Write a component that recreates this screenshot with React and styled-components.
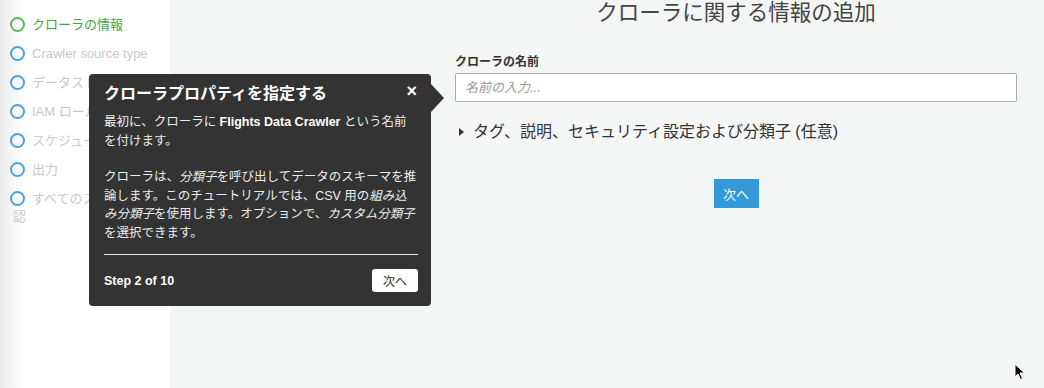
import React from "react";
import styled, { createGlobalStyle } from "styled-components";

const GlobalStyle = createGlobalStyle`
  html, body {
    margin: 0;
    padding: 0;
    height: 100%;
    background: #f4f5f5;
    font-family: "Liberation Sans", "Noto Sans CJK JP", sans-serif;
  }
  #root {
    height: 100%;
  }
`;

const Page = styled.div`
  position: relative;
  display: flex;
  height: 388px;
  overflow: hidden;
`;

const Sidebar = styled.div`
  width: 170px;
  flex-shrink: 0;
  box-sizing: border-box;
  padding: 16px 5px 0 13px;
  background: linear-gradient(to right, #ececec 0px, #fafafa 18px, #ffffff 28px);
`;

const Step = styled.div`
  font-size: 13px;
  line-height: 18px;
  margin-bottom: 11px;
  color: ${({ active }) => (active ? "#3da640" : "#c8c8c8")};
`;

const Circle = styled.span`
  display: inline-block;
  box-sizing: border-box;
  width: 15px;
  height: 15px;
  margin: 0 7px 0 -3px;
  vertical-align: -3px;
  border-radius: 50%;
  border: 2px solid ${({ active }) => (active ? "#5bb85d" : "#4aa3df")};
`;

const Main = styled.div`
  flex: 1;
  padding-left: 285px;
`;

const Form = styled.div`
  width: 562px;
  display: flex;
  flex-direction: column;
`;

const Title = styled.h1`
  margin: 0;
  font-size: 21.5px;
  line-height: 26px;
  font-weight: 400;
  color: #444;
  text-align: center;
`;

const Label = styled.label`
  margin-top: 28px;
  font-size: 12px;
  line-height: 16px;
  font-weight: 700;
  color: #333;
`;

const Input = styled.input`
  margin-top: 3px;
  height: 29px;
  box-sizing: border-box;
  border: 1px solid #aaa;
  border-radius: 2px;
  background: #fff;
  padding: 0 9px;
  font-family: inherit;
  font-size: 13px;
  outline: none;
  &::placeholder {
    color: #999;
    font-style: italic;
  }
`;

const Expander = styled.div`
  margin-top: 20px;
  display: flex;
  align-items: center;
  gap: 9px;
  padding-left: 4px;
  font-size: 16px;
  line-height: 20px;
  color: #333;
`;

const Caret = styled.span`
  width: 0;
  height: 0;
  border-left: 5px solid #333;
  border-top: 4px solid transparent;
  border-bottom: 4px solid transparent;
`;

const PrimaryButton = styled.button`
  align-self: center;
  margin-top: 37px;
  width: 45px;
  height: 29px;
  border: none;
  background: #3399d7;
  color: #fff;
  font-family: inherit;
  font-size: 13px;
  padding: 0;
`;

const Tooltip = styled.div`
  position: absolute;
  left: 89px;
  top: 74px;
  width: 342px;
  box-sizing: border-box;
  padding: 9px 13px 14px 15px;
  background: #333;
  border-radius: 4px;
  color: #ececec;
  &::after {
    content: "";
    position: absolute;
    right: -13px;
    top: 10px;
    border-left: 13px solid #333;
    border-top: 14px solid transparent;
    border-bottom: 14px solid transparent;
  }
`;

const TipHead = styled.div`
  display: flex;
  justify-content: space-between;
  align-items: center;
`;

const TipTitle = styled.div`
  font-size: 16px;
  line-height: 22px;
  font-weight: 700;
  color: #fff;
`;

const Close = styled.span`
  font-size: 18px;
  line-height: 18px;
  font-weight: 700;
  color: #fff;
  margin-top: -6px;
  margin-right: 1px;
`;

const TipText = styled.p`
  margin: ${({ first }) => (first ? "8px" : "18px")} 0 0;
  font-size: 12.5px;
  line-height: 18.5px;
  white-space: nowrap;
  b {
    color: #fff;
  }
`;

const Rule = styled.div`
  margin-top: 12px;
  height: 1px;
  background: #e8e8e8;
`;

const TipFooter = styled.div`
  margin-top: 14px;
  display: flex;
  justify-content: space-between;
  align-items: center;
`;

const StepCount = styled.span`
  font-size: 12.5px;
  font-weight: 700;
  color: #fff;
`;

const NextSmall = styled.button`
  width: 46px;
  height: 23px;
  border: none;
  border-radius: 3px;
  background: #fff;
  color: #333;
  font-family: inherit;
  font-size: 12px;
  padding: 0;
`;

const Cursor = styled.svg`
  position: absolute;
  left: 1014px;
  top: 363px;
`;

const steps = [
  { label: "クローラの情報", active: true },
  { label: "Crawler source type" },
  { label: "データストアの追加" },
  { label: "IAM ロールの選択" },
  { label: "スケジュールの作成" },
  { label: "出力" },
  { label: "すべてのステップの確認" },
];

export default function App() {
  return (
    <>
      <GlobalStyle />
      <Page>
        <Sidebar>
          {steps.map((s) => (
            <Step key={s.label} active={s.active}>
              <Circle active={s.active} />
              {s.label}
            </Step>
          ))}
        </Sidebar>
        <Main>
          <Form>
            <Title>クローラに関する情報の追加</Title>
            <Label>クローラの名前</Label>
            <Input placeholder="名前の入力..." />
            <Expander>
              <Caret />
              タグ、説明、セキュリティ設定および分類子 (任意)
            </Expander>
            <PrimaryButton>次へ</PrimaryButton>
          </Form>
        </Main>

        <Tooltip>
          <TipHead>
            <TipTitle>クローラプロパティを指定する</TipTitle>
            <Close>×</Close>
          </TipHead>
          <TipText first>
            最初に、クローラに <b>Flights Data Crawler</b> という名前
            <br />
            を付けます。
          </TipText>
          <TipText>
            クローラは、<i>分類子</i>を呼び出してデータのスキーマを推
            <br />
            論します。このチュートリアルでは、CSV 用の<i>組み込</i>
            <br />
            <i>み分類子</i>を使用します。オプションで、<i>カスタム分類子</i>
            <br />
            を選択できます。
          </TipText>
          <Rule />
          <TipFooter>
            <StepCount>Step 2 of 10</StepCount>
            <NextSmall>次へ</NextSmall>
          </TipFooter>
        </Tooltip>

        <Cursor width="12" height="18" viewBox="0 0 12 18">
          <path d="M1 1 L1 14 L4 11 L6.5 16.5 L8.5 15.5 L6 10 L10.5 10 Z" fill="#000" stroke="#fff" strokeWidth="1" />
        </Cursor>
      </Page>
    </>
  );
}
